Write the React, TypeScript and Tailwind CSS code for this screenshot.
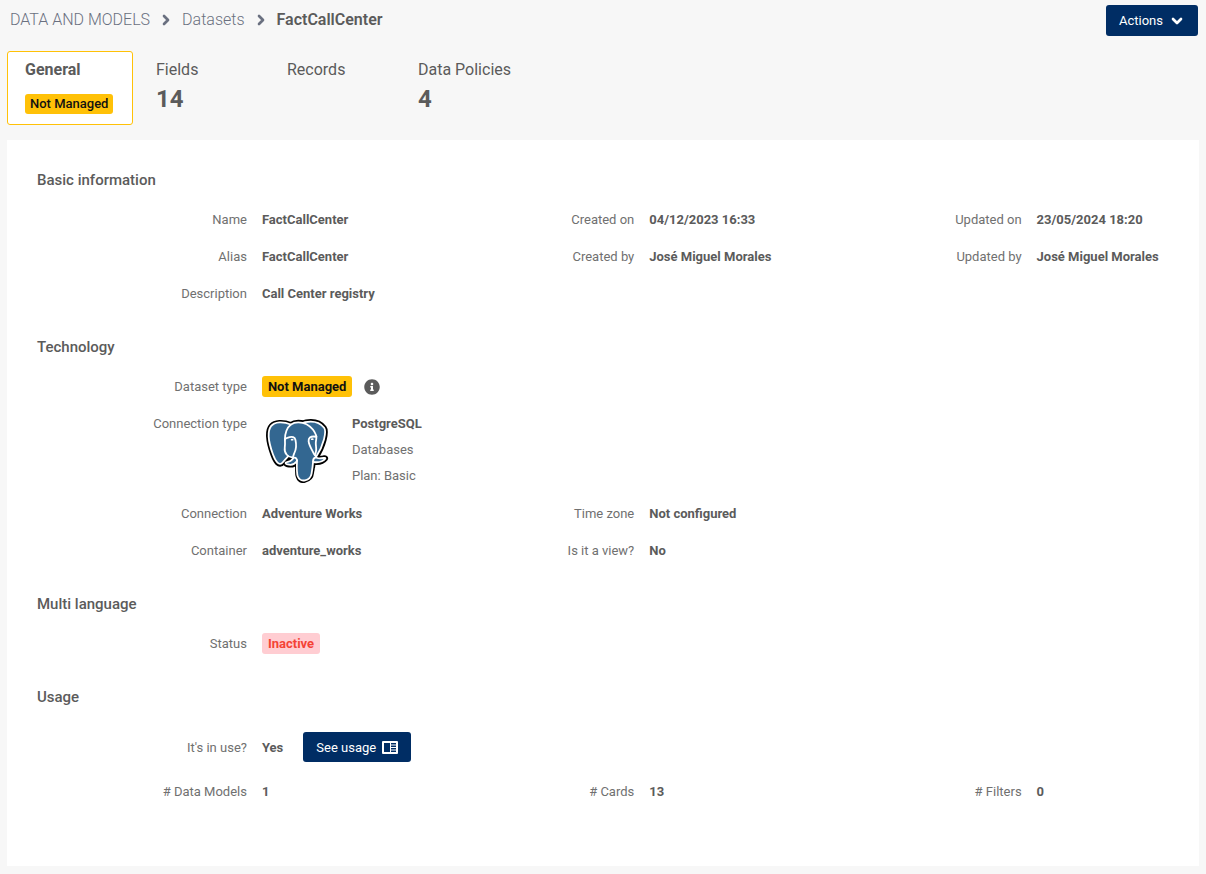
import type { ReactNode } from 'react';
import { ChevronDown, ChevronRight } from 'lucide-react';
import { FaInfoCircle } from 'react-icons/fa';

const tabs = [
  { label: 'General', badge: 'Not Managed', active: true },
  { label: 'Fields', count: 14 },
  { label: 'Records' },
  { label: 'Data Policies', count: 4 }
];

const elephant =
  'M402.395,271.23c-50.302,10.376-53.76-6.655-53.76-6.655c53.111-78.803,75.313-178.843,56.153-203.326C352.514-5.534,262.036,26.049,260.522,26.869l-0.482,0.089c-9.938-2.062-21.06-3.294-33.542-3.496c-22.761-0.374-40.032,5.967-53.133,15.904c0,0-161.411-66.499-153.899,83.628c1.597,31.938,45.776,241.657,98.471,178.312c19.259-23.163,37.867-42.748,37.867-42.748c9.243,6.14,20.308,9.272,31.908,8.147l0.901-0.765c-0.28,2.876-0.152,5.689,0.361,9.019c-13.575,15.167-9.586,17.829-36.723,23.416c-27.457,5.659-11.327,15.734-0.796,18.367c12.768,3.193,42.305,7.716,62.268-20.224l-0.796,3.188c5.319,4.26,9.054,27.711,8.428,48.969c-0.626,21.259-1.044,35.854,3.147,47.254c4.191,11.4,8.368,37.05,44.042,29.406c29.809-6.388,45.256-22.942,47.405-50.555c1.525-19.631,4.976-16.729,5.194-34.28l2.768-8.309c3.192-26.611,0.507-35.196,18.872-31.203l4.463,0.392c13.517,0.615,31.208-2.174,41.591-7c22.358-10.376,35.618-27.7,13.573-23.148z';

const elephantLines = [
  'M215.866,286.484c-1.385,49.516,0.348,99.377,5.193,111.495c4.848,12.118,15.223,35.688,50.9,28.045c29.806-6.39,40.651-18.756,45.357-46.051c3.466-20.082,10.148-75.854,11.005-87.281',
  'M173.104,38.256c0,0-161.521-66.016-154.012,84.109c1.597,31.938,45.779,241.664,98.473,178.316c19.256-23.166,36.671-41.335,36.671-41.335',
  'M260.349,26.207c-5.591,1.753,89.848-34.889,144.087,34.417c19.159,24.484-3.043,124.519-56.153,203.329',
  'M348.282,263.953c0,0,3.461,17.036,53.764,6.653c22.04-4.552,8.776,12.774-13.577,23.155c-18.345,8.514-59.474,10.696-60.146-1.069c-1.729-30.355,21.647-21.133,19.96-28.739c-1.525-6.85-11.979-13.573-18.894-30.338c-6.037-14.633-82.796-126.849,21.287-110.183c3.813-0.789-27.146-99.002-124.553-100.599c-97.385-1.597-94.19,119.762-94.19,119.762',
  'M188.604,274.334c-13.577,15.166-9.584,17.829-36.723,23.417c-27.459,5.66-11.326,15.733-0.797,18.365c12.768,3.195,42.307,7.718,62.266-20.229c6.078-8.509-0.036-22.086-8.385-25.547c-4.034-1.671-9.428-3.765-16.361,3.994z',
  'M187.715,274.069c-1.368-8.917,2.93-19.528,7.536-31.942c6.922-18.626,22.893-37.255,10.117-96.339c-9.523-44.029-73.396-9.163-73.436-3.193c-0.039,5.968,2.889,30.26-1.067,58.548c-5.162,36.913,23.488,68.132,56.479,64.938',
  'M350.676,123.432c0.863,15.994-3.445,26.888-3.988,43.914c-0.804,24.748,11.799,53.074-7.191,81.435'
];

function PostgresLogo() {
  return (
    <svg viewBox="0 0 432 445" className="mt-[3px] mb-px h-[70px] w-[70px] shrink-0 p-[3px]" role="img" aria-label="PostgreSQL">
      <path d={elephant} fill="#000" stroke="#000" strokeWidth="37" />
      <path d={elephant} fill="#336791" />
      <g fill="none" stroke="#fff" strokeWidth="12.5" strokeLinecap="round" strokeLinejoin="round">
        {elephantLines.map((d) => <path key={d} d={d} />)}
      </g>
      <ellipse cx="182" cy="144" rx="10" ry="6" fill="#fff" />
      <ellipse cx="322" cy="140" rx="10" ry="6" fill="#fff" />
    </svg>
  );
}

function UsageIcon() {
  return (
    <svg viewBox="0 0 16 13" className="h-[13px] w-4" aria-hidden="true">
      <rect width="16" height="13" rx="1" fill="#fff" />
      <path d="M2 2h6v9H2zM9 2h5v1.5H9zM9 4.5h5V6H9zM9 7h5v1.5H9zM9 9.5h5V11H9z" fill="#002d64" />
    </svg>
  );
}

function Field({ label, children }: { label?: string; children?: ReactNode }) {
  if (!label) return <div />;
  return (
    <div className="flex items-baseline py-2">
      <dt className="w-7/12 shrink-0 text-right text-[#707070]">{label}</dt>
      <dd className="pl-[15px] font-bold whitespace-nowrap">{children}</dd>
    </div>
  );
}

function Section({ title, children }: { title: string; children: ReactNode }) {
  return (
    <section>
      <h2 className="px-4 pt-6 pb-2.5 text-[15px] leading-[22px] font-medium">{title}</h2>
      <dl className="grid grid-cols-3">{children}</dl>
    </section>
  );
}

export default function App() {
  return (
    <div className="min-h-screen bg-[#f7f7f7] px-[7px] pb-2 font-['Roboto',sans-serif] text-[13px] leading-[21px] text-[#5b5b5b]">
      <header className="flex items-start justify-between pt-[5px] pr-px pl-[3px]">
        <nav aria-label="Breadcrumb" className="flex h-[30px] items-center gap-2 text-base text-[#6a7080]">
          <a href="#models" className="font-light">DATA AND MODELS</a>
          <ChevronRight size={16} strokeWidth={4} />
          <a href="#datasets" className="font-light">Datasets</a>
          <ChevronRight size={16} strokeWidth={4} />
          <span className="font-semibold text-[#5b5b5b]">FactCallCenter</span>
        </nav>
        <button type="button" className="flex h-[31px] items-center gap-1.5 rounded-[3px] bg-[#002d64] px-[13px] text-[13px] text-white">
          Actions
          <ChevronDown size={16} strokeWidth={4} />
        </button>
      </header>

      <div role="tablist" className="mt-[15px] flex gap-[5px]">
        {tabs.map((tab) => (
          <button
            key={tab.label}
            type="button"
            role="tab"
            aria-selected={!!tab.active}
            className={`flex h-[74px] w-[126px] flex-col items-start rounded-[3px] border px-[17px] pt-[7px] text-base whitespace-nowrap ${tab.active ? 'border-[#ffc107] bg-white font-bold' : 'border-transparent'}`}
          >
            <span className="leading-[22px]">{tab.label}</span>
            {tab.badge && <span className="mt-[13px] rounded-[3px] bg-[#ffc107] px-[5px] text-[13px] leading-5 font-medium text-[#111]">{tab.badge}</span>}
            {tab.count && <span className="mt-1 text-2xl leading-7 font-bold">{tab.count}</span>}
          </button>
        ))}
      </div>

      <main className="mt-[15px] min-h-[calc(100vh-148px)] bg-white pt-[5px] pr-4 pb-12 pl-3.5">
        <Section title="Basic information">
          <Field label="Name">FactCallCenter</Field>
          <Field label="Created on">04/12/2023 16:33</Field>
          <Field label="Updated on">23/05/2024 18:20</Field>
          <Field label="Alias">FactCallCenter</Field>
          <Field label="Created by">José Miguel Morales</Field>
          <Field label="Updated by">José Miguel Morales</Field>
          <Field label="Description">Call Center registry</Field>
        </Section>

        <Section title="Technology">
          <Field label="Dataset type">
            <span className="flex items-center gap-3">
              <span className="rounded-[3px] bg-[#ffc107] px-1.5 text-[#111]">Not Managed</span>
              <FaInfoCircle size={16} />
            </span>
          </Field>
          <Field />
          <Field />
          <div className="flex py-2">
            <dt className="w-7/12 shrink-0 text-right text-[#707070]">Connection type</dt>
            <dd className="flex gap-5 pl-[15px]">
              <PostgresLogo />
              <div className="flex flex-col gap-[5px] whitespace-nowrap text-[#707070]">
                <strong className="text-[#5b5b5b]">PostgreSQL</strong>
                <span>Databases</span>
                <span>Plan: Basic</span>
              </div>
            </dd>
          </div>
          <Field />
          <Field />
          <Field label="Connection">Adventure Works</Field>
          <Field label="Time zone">Not configured</Field>
          <Field />
          <Field label="Container">adventure_works</Field>
          <Field label="Is it a view?">No</Field>
        </Section>

        <Section title="Multi language">
          <Field label="Status">
            <span className="inline-block rounded-[3px] bg-[#ffcdd2] px-1.5 text-[#f44336]">Inactive</span>
          </Field>
        </Section>

        <Section title="Usage">
          <div className="flex items-center pt-3.5 pb-[11px]">
            <dt className="w-7/12 shrink-0 text-right text-[#707070]">It's in use?</dt>
            <dd className="flex items-center gap-5 pl-[15px] font-bold">
              Yes
              <button type="button" className="flex h-[30px] items-center gap-1.5 rounded-[3px] bg-[#002d64] px-[13px] text-[13px] font-normal whitespace-nowrap text-white">
                See usage
                <UsageIcon />
              </button>
            </dd>
          </div>
          <Field />
          <Field />
          <Field label="# Data Models">1</Field>
          <Field label="# Cards">13</Field>
          <Field label="# Filters">0</Field>
        </Section>
      </main>
    </div>
  );
}
